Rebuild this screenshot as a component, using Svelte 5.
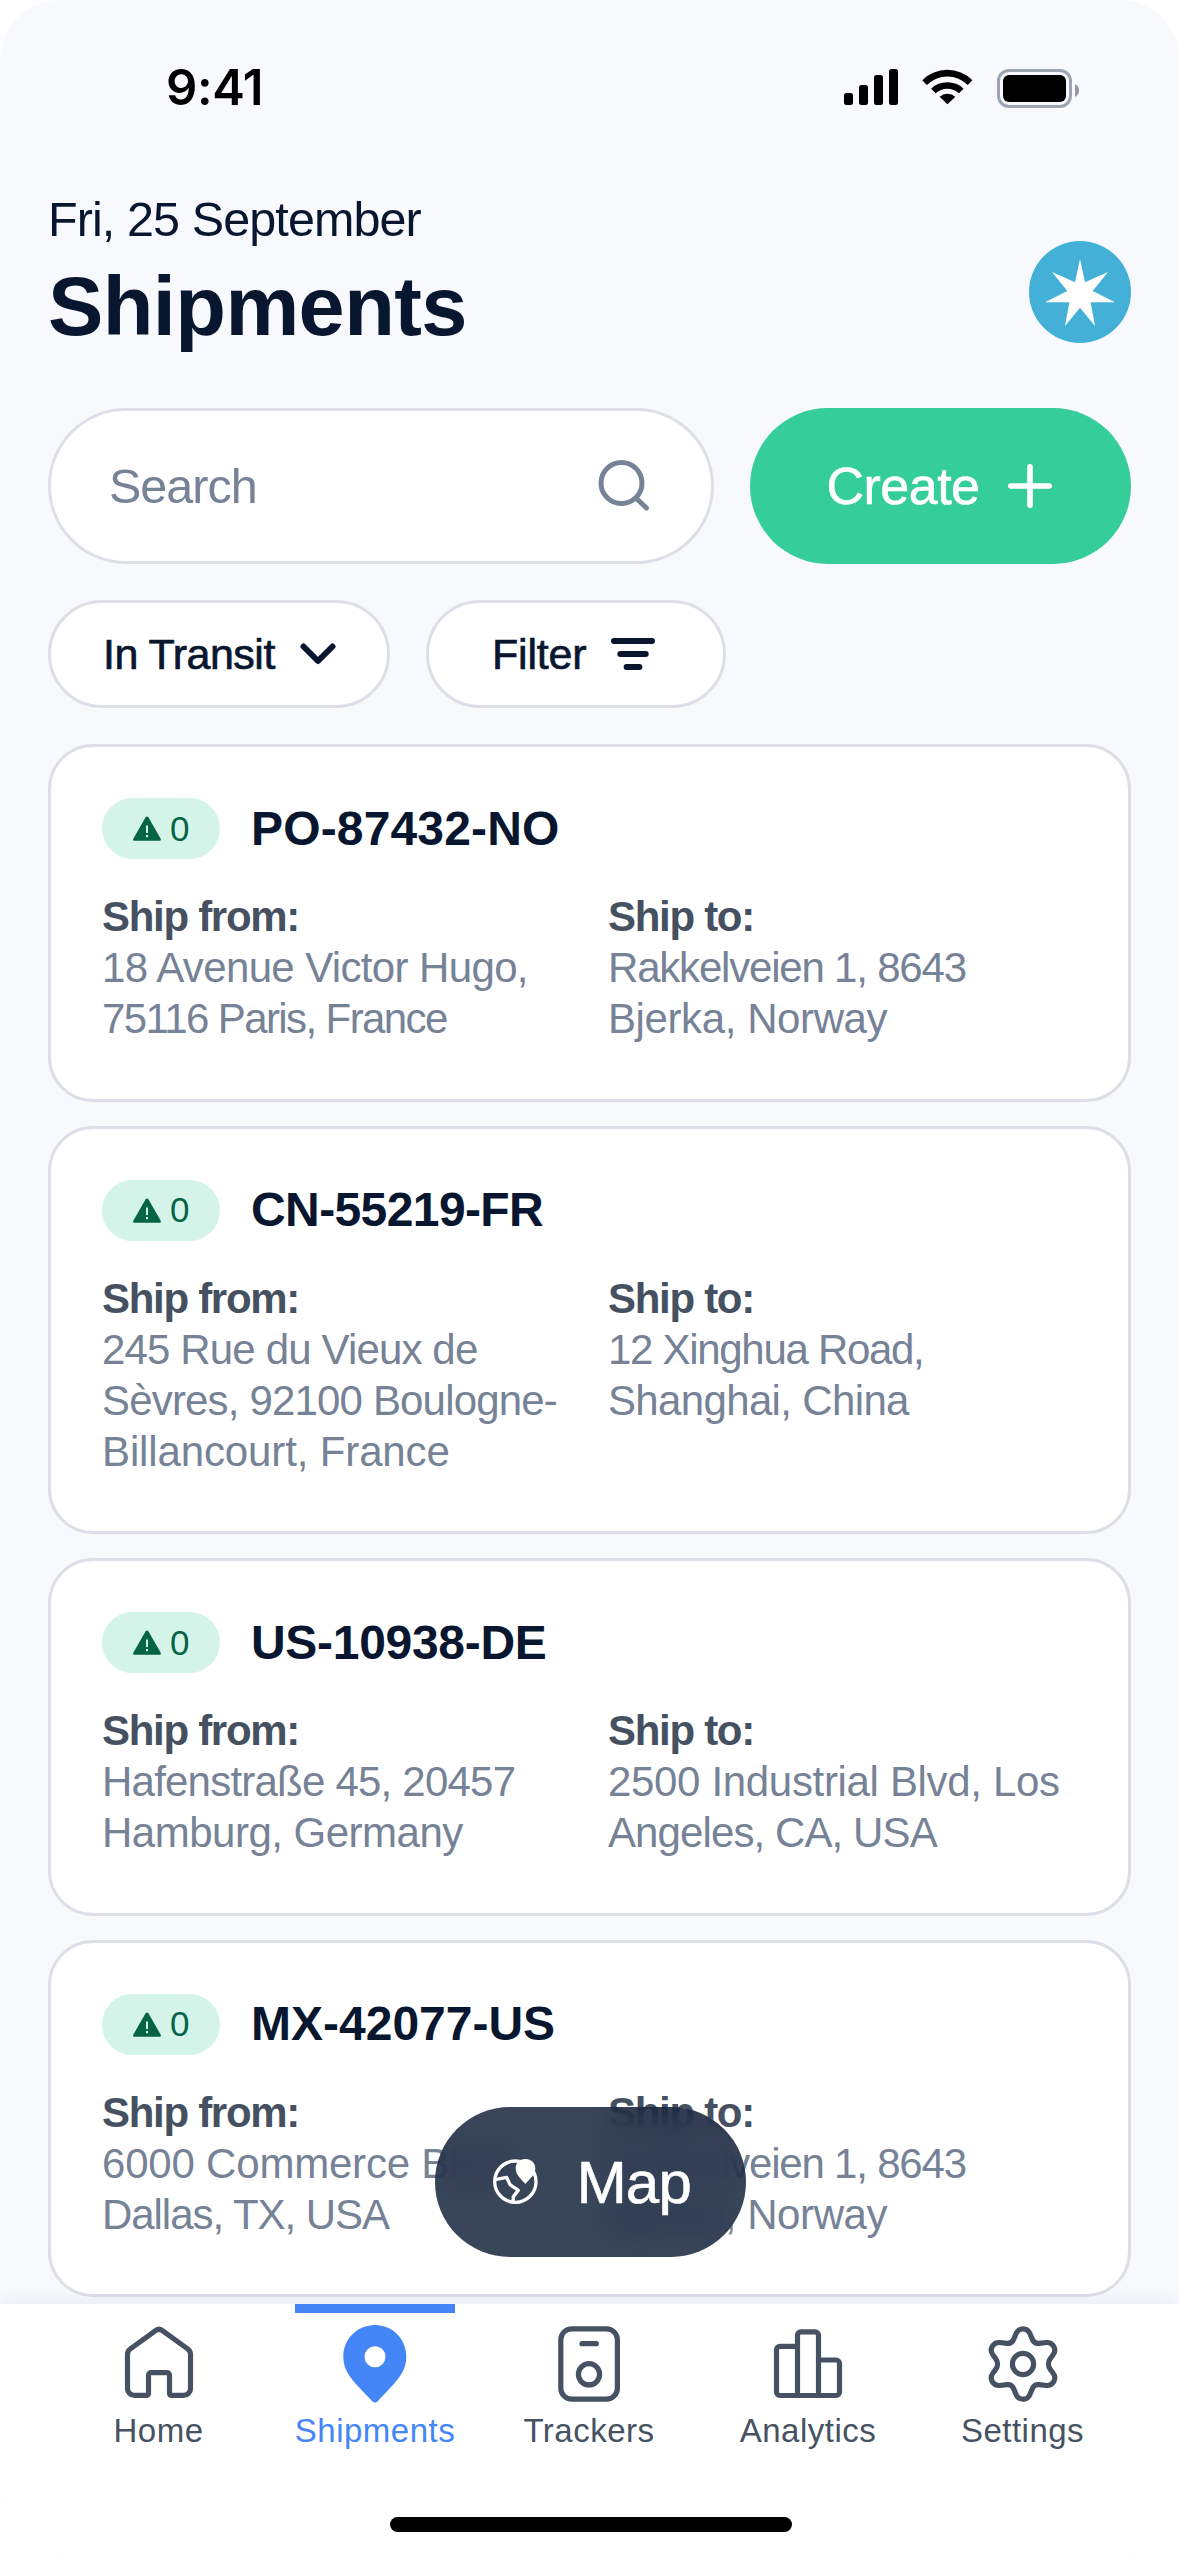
<script lang="ts">
	interface Line {
		text: string;
		tracking: number;
	}

	interface Shipment {
		id: string;
		alerts: number;
		tracking: number;
		from: Line[];
		to: Line[];
	}

	// tracking is the letter spacing in px
	const shipments: Shipment[] = [
		{
			id: 'PO-87432-NO',
			alerts: 0,
			tracking: 0.15,
			from: [
				{ text: '18 Avenue Victor Hugo,', tracking: -0.63 },
				{ text: '75116 Paris, France', tracking: -1.6 }
			],
			to: [
				{ text: 'Rakkelveien 1, 8643', tracking: -1.2 },
				{ text: 'Bjerka, Norway', tracking: -0.4 }
			]
		},
		{
			id: 'CN-55219-FR',
			alerts: 0,
			tracking: -0.6,
			from: [
				{ text: '245 Rue du Vieux de', tracking: -0.85 },
				{ text: 'Sèvres, 92100 Boulogne-', tracking: -0.83 },
				{ text: 'Billancourt, France', tracking: -0.13 }
			],
			to: [
				{ text: '12 Xinghua Road,', tracking: -1.3 },
				{ text: 'Shanghai, China', tracking: -0.65 }
			]
		},
		{
			id: 'US-10938-DE',
			alerts: 0,
			tracking: -0.3,
			from: [
				{ text: 'Hafenstraße 45, 20457', tracking: -0.78 },
				{ text: 'Hamburg, Germany', tracking: -0.5 }
			],
			to: [
				{ text: '2500 Industrial Blvd, Los', tracking: -0.33 },
				{ text: 'Angeles, CA, USA', tracking: -0.9 }
			]
		},
		{
			id: 'MX-42077-US',
			alerts: 0,
			tracking: 0,
			from: [
				{ text: '6000 Commerce Blvd,', tracking: -0.2 },
				{ text: 'Dallas, TX, USA', tracking: -1.05 }
			],
			to: [
				{ text: 'Rakkelveien 1, 8643', tracking: -1.2 },
				{ text: 'Bjerka, Norway', tracking: -0.4 }
			]
		}
	];

	const tabs = ['Home', 'Shipments', 'Trackers', 'Analytics', 'Settings'];
	let active = $state('Shipments');
</script>

{#snippet address(label: string, lines: Line[])}
	<div class="address">
		<div class="address-label">{label}</div>
		{#each lines as line}
			<div style={`letter-spacing: ${line.tracking}px`}>{line.text}</div>
		{/each}
	</div>
{/snippet}

<div class="phone">
	<main>
		<div class="status">
			<span class="time">9:41</span>
			<div class="status-icons">
				<svg class="signal" viewBox="0 0 54 36">
					<rect x="0" y="24" width="9" height="12" rx="2.5" />
					<rect x="15" y="16" width="9" height="20" rx="2.5" />
					<rect x="30" y="6" width="9" height="30" rx="2.5" />
					<rect x="45" y="0" width="9" height="36" rx="2.5" />
				</svg>
				<svg class="wifi" viewBox="426 206 154 110">
					<path d="M426 240A109 109 0 0 1 579 240L565 255A88 88 0 0 0 440 255Z" />
					<path d="M453 266A72 72 0 0 1 552 266L538 280A52 52 0 0 0 467 280Z" />
					<path d="M479 291A36 36 0 0 1 527 291L503 314Z" />
				</svg>
				<div class="battery"><span></span></div>
				<svg class="nub" viewBox="0 0 4 13"><path d="M0 0C5.3 2.5 5.3 10.5 0 13Z" /></svg>
			</div>
		</div>

		<header>
			<div>
				<div class="date">Fri, 25 September</div>
				<h1>Shipments</h1>
			</div>
			<svg class="avatar" viewBox="0 0 306 306">
				<circle cx="153" cy="153" r="153" fill="#44b0d7" />
				<path
					fill="#fff"
					d="M153 54L168 124 237 93 191 150 258 184 185 184 198 255 153 200 108 255 121 184 48 184 115 150 69 93 138 124Z"
				/>
			</svg>
		</header>

		<div class="actions">
			<div class="search">
				<span>Search</span>
				<svg viewBox="0 0 60 60">
					<circle cx="27.5" cy="27" r="20.5" />
					<path d="M42 42L52.5 52" />
				</svg>
			</div>
			<button class="create">
				Create
				<svg viewBox="0 0 44 44"><path d="M22 2.8V41.2M2.8 22H41.2" /></svg>
			</button>
		</div>

		<div class="filters">
			<button class="chip status-chip">
				<span>In Transit</span>
				<svg class="chevron" viewBox="0 0 36 22"><path d="M3.5 3.5L18 18L32.5 3.5" /></svg>
			</button>
			<button class="chip filter-chip">
				<span>Filter</span>
				<svg class="bars" viewBox="0 0 44 32">
					<path d="M3 3H41M9.3 16H34.7M15.6 29H28.4" />
				</svg>
			</button>
		</div>

		<div class="list">
			{#each shipments as shipment}
				<article class="card">
					<div class="card-head">
						<span class="badge">
							<svg viewBox="0 0 28 25">
								<path
									fill="#046444"
									d="M12.6 1.2C13.2 0.1 14.8 0.1 15.4 1.2L27.7 22.7C28.3 23.7 27.6 24.8 26.4 24.8H1.6C0.4 24.8 -0.3 23.7 0.3 22.7Z"
								/>
								<path fill="#d5f4e9" d="M13 9.5H15V17H13ZM13 19H15V21.3H13Z" />
							</svg>
							{shipment.alerts}
						</span>
						<h2 style={`letter-spacing: ${shipment.tracking}px`}>{shipment.id}</h2>
					</div>
					<div class="addresses">
						{@render address('Ship from:', shipment.from)}
						{@render address('Ship to:', shipment.to)}
					</div>
				</article>
			{/each}
		</div>
	</main>

	<button class="map">
		<svg viewBox="276 294 140 142">
			<circle cx="346" cy="365" r="62" />
			<path d="M285 359L320 352L330 374L355 391L340 410L339 428" />
			<path
				class="pin"
				d="M376 297C357 297 347 310 347 325C347 345 362 356 376 372C390 356 406 345 406 325C406 310 395 297 376 297Z"
			/>
		</svg>
		Map
	</button>

	<nav>
		{#each tabs as tab}
			<button class="tab" class:active={active === tab} onclick={() => (active = tab)}>
				<svg viewBox="0 0 84 84">
					{#if tab === 'Home'}
						<path
							d="M38.9 8.4a5.2 5.2 0 0 1 6.2 0L70.8 27a6.5 6.5 0 0 1 2.7 5.4V66.4a7 7 0 0 1-7 7H54.5a2 2 0 0 1-2-2V53.2a2.5 2.5 0 0 0-2.5-2.5H34a2.5 2.5 0 0 0-2.5 2.5V71.4a2 2 0 0 1-2 2H17.5a7 7 0 0 1-7-7V32.4a6.5 6.5 0 0 1 2.7-5.4Z"
						/>
					{:else if tab === 'Shipments'}
						<path
							class="solid"
							d="M42 3C24.4 3 10.3 17 10.3 34.6C10.3 51 21 60 39.2 79.2a3.9 3.9 0 0 0 5.6 0C63 60 73.3 51 73.3 34.6C73.3 17 59.6 3 42 3ZM42 24.2a10.5 10.5 0 1 1 0 21a10.5 10.5 0 1 1 0-21Z"
						/>
					{:else if tab === 'Trackers'}
						<rect x="13.8" y="6.8" width="56.6" height="70.4" rx="11" />
						<path d="M35 21.7H49.3" />
						<circle cx="42" cy="52.3" r="10.6" />
					{:else if tab === 'Analytics'}
						<path
							d="M31.4 24.3H14a3.5 3.5 0 0 0-3.5 3.5V70a3.5 3.5 0 0 0 3.5 3.5H70a3.5 3.5 0 0 0 3.5-3.5V41.5a3.5 3.5 0 0 0-3.5-3.5H52.5M31.5 73.4V13.3a3.5 3.5 0 0 1 3.5-3.5H49a3.5 3.5 0 0 1 3.5 3.5V73.4"
						/>
					{:else}
						<path
							d="M42 6.8C45 6.8 47.6 8.6 48.8 11.3L51.3 17.2C52.4 20 55 21.6 58 21.3L65.5 20.5C68.7 20.3 71.3 21.8 72.8 24.5C74.3 27.3 74 30.5 72 33L69.3 36.6C66.9 39.8 66.9 44.2 69.3 47.4L72 51C74 53.5 74.3 56.7 72.8 59.5C71.3 62.2 68.7 63.7 65.5 63.5L58 62.7C55 62.4 52.4 64 51.3 66.8L48.8 72.7C47.6 75.4 45 77.2 42 77.2C39 77.2 36.4 75.4 35.2 72.7L32.7 66.8C31.6 64 29 62.4 26 62.7L18.5 63.5C15.3 63.7 12.7 62.2 11.2 59.5C9.7 56.7 10 53.5 12 51L14.7 47.4C17.1 44.2 17.1 39.8 14.7 36.6L12 33C10 30.5 9.7 27.3 11.2 24.5C12.7 21.8 15.3 20.3 18.5 20.5L26 21.3C29 21.6 31.6 20 32.7 17.2L35.2 11.3C36.4 8.6 39 6.8 42 6.8Z"
						/>
						<circle cx="42" cy="42" r="10.6" />
					{/if}
				</svg>
				<span>{tab}</span>
			</button>
		{/each}
		<div class="home-indicator"></div>
	</nav>
</div>

<style>
	:global(body) {
		background: #fff;
	}

	.phone {
		position: relative;
		display: flex;
		flex-direction: column;
		width: 1179px;
		height: 2556px;
		overflow: hidden;
		border-radius: 60px;
		background: #f8f9fd;
		color: #081630;
		font-family: 'Liberation Sans', Arial, sans-serif;
		white-space: nowrap;
	}

	button {
		padding: 0;
		border: none;
		background: none;
		color: inherit;
		font: inherit;
	}

	svg {
		display: block;
		flex: none;
	}

	main {
		height: 2304px;
		flex: none;
		box-sizing: border-box;
		padding: 0 48px;
		overflow: hidden;
	}

	.status {
		display: flex;
		align-items: center;
		justify-content: space-between;
		height: 174px;
		padding: 0 52px 0 118px;
	}

	.time {
		color: #000;
		font-family: Inter, sans-serif;
		font-size: 49px;
		font-weight: 600;
		letter-spacing: -0.4px;
	}

	.status-icons {
		display: flex;
		align-items: center;
	}

	.signal {
		width: 54px;
		height: 36px;
	}

	.wifi {
		width: 51px;
		height: 36px;
		margin: 0 24px;
	}

	.battery {
		box-sizing: border-box;
		width: 75px;
		height: 39px;
		margin: 3px 3px 0 0;
		padding: 3px;
		border: 3px solid #9ca5b1;
		border-radius: 12px;
	}

	.battery span {
		display: block;
		height: 27px;
		border-radius: 6px;
		background: #000;
	}

	.nub {
		width: 4px;
		height: 13px;
		margin-top: 6px;
		fill: #8f99a8;
	}

	header {
		display: flex;
		align-items: flex-end;
		justify-content: space-between;
		padding-top: 16px;
	}

	.date {
		font-size: 48.5px;
		line-height: 58px;
		letter-spacing: -0.9px;
	}

	h1 {
		margin: 13px 0 0;
		font-size: 83px;
		font-weight: 700;
		line-height: 92px;
		letter-spacing: -0.6px;
	}

	.avatar {
		width: 102px;
		height: 102px;
		margin-bottom: 10px;
	}

	.actions {
		display: flex;
		gap: 36px;
		margin-top: 55px;
	}

	.search {
		box-sizing: border-box;
		display: flex;
		flex: 1;
		align-items: center;
		justify-content: space-between;
		height: 156px;
		padding: 0 57px 0 58px;
		border: 3px solid #dedee8;
		border-radius: 78px;
		background: #fff;
		color: #768296;
		font-size: 48.5px;
		letter-spacing: -1px;
	}

	.search svg {
		width: 60px;
		height: 60px;
		fill: none;
		stroke: #768296;
		stroke-width: 5;
		stroke-linecap: round;
	}

	.create {
		display: flex;
		align-items: center;
		justify-content: center;
		gap: 28px;
		box-sizing: border-box;
		width: 381px;
		height: 156px;
		padding-right: 3px;
		border-radius: 78px;
		background: #35cd9a;
		color: #fff;
		font-size: 52px;
		letter-spacing: -0.5px;
		-webkit-text-stroke: 0.6px #fff;
	}

	.create svg {
		width: 44px;
		height: 44px;
		stroke: #fff;
		stroke-width: 5.6;
		stroke-linecap: round;
	}

	.filters {
		display: flex;
		gap: 36px;
		margin-top: 36px;
	}

	.chip {
		box-sizing: border-box;
		display: flex;
		align-items: center;
		height: 108px;
		border: 3px solid #dedee8;
		border-radius: 54px;
		background: #fff;
		font-size: 43px;
		letter-spacing: -0.5px;
		-webkit-text-stroke: 0.7px #081630;
	}

	.chip svg {
		fill: none;
		stroke: #081630;
		stroke-width: 6;
		stroke-linecap: round;
		stroke-linejoin: round;
	}

	.status-chip {
		justify-content: space-between;
		width: 342px;
		padding: 0 51px 0 52px;
	}

	.filter-chip {
		justify-content: space-between;
		width: 300px;
		padding: 0 68px 0 63px;
		letter-spacing: -0.2px;
	}

	.chevron {
		width: 36px;
		height: 22px;
	}

	.bars {
		width: 44px;
		height: 32px;
	}

	.list {
		display: flex;
		flex-direction: column;
		gap: 24px;
		margin-top: 36px;
	}

	.card {
		box-sizing: border-box;
		padding: 51px 51px 54.6px;
		border: 3px solid #dedee8;
		border-radius: 45px;
		background: #fff;
	}

	.card-head {
		display: flex;
		align-items: center;
		gap: 31px;
		height: 61px;
	}

	.badge {
		display: flex;
		align-items: center;
		justify-content: center;
		gap: 9.5px;
		width: 118px;
		height: 61px;
		border-radius: 30.5px;
		background: #d5f4e9;
		color: #046444;
		font-size: 35px;
	}

	.badge svg {
		width: 28px;
		height: 25px;
	}

	h2 {
		margin: 0;
		font-size: 48px;
		font-weight: 700;
		line-height: 60px;
	}

	.addresses {
		display: grid;
		grid-template-columns: 506px 1fr;
		margin-top: 32px;
	}

	.address {
		color: #768296;
		font-size: 42px;
		line-height: 51px;
	}

	.address-label {
		color: #455061;
		font-weight: 700;
		letter-spacing: -1.3px;
	}

	.map {
		position: absolute;
		top: 2107px;
		left: 435px;
		display: flex;
		align-items: center;
		gap: 38px;
		box-sizing: border-box;
		width: 311px;
		height: 150px;
		padding-left: 57px;
		border-radius: 75px;
		background: rgba(8, 22, 48, 0.8);
		backdrop-filter: blur(15px);
		color: #fff;
		font-size: 60px;
		letter-spacing: -0.8px;
		-webkit-text-stroke: 0.6px #fff;
	}

	.map svg {
		width: 46.7px;
		height: 47.3px;
		fill: none;
		stroke: #fff;
		stroke-width: 10;
		stroke-linejoin: round;
	}

	.map .pin {
		fill: #fff;
		stroke: none;
	}

	nav {
		position: relative;
		display: grid;
		grid-template-columns: 215px 218px 210px 228px 201px;
		flex: 1;
		padding-left: 51px;
		background: #fff;
		box-shadow: 0 -3px 18px rgba(8, 22, 48, 0.06);
	}

	.tab {
		position: relative;
		display: flex;
		flex-direction: column;
		align-items: center;
		justify-self: center;
		height: 160px;
		padding-top: 18px;
		color: #465262;
		font-size: 33px;
		line-height: 40px;
		letter-spacing: 0.5px;
	}

	.tab svg {
		width: 84px;
		height: 84px;
		margin-bottom: 5px;
		fill: none;
		stroke: currentColor;
		stroke-width: 5.2;
		stroke-linecap: round;
		stroke-linejoin: round;
	}

	.tab .solid {
		fill: currentColor;
		fill-rule: evenodd;
		stroke: none;
	}

	.tab.active {
		color: #4486f7;
		box-shadow: inset 0 9px #4486f7;
	}

	.home-indicator {
		position: absolute;
		bottom: 24px;
		left: 390px;
		width: 402px;
		height: 15px;
		border-radius: 7.5px;
		background: #000;
	}
</style>
